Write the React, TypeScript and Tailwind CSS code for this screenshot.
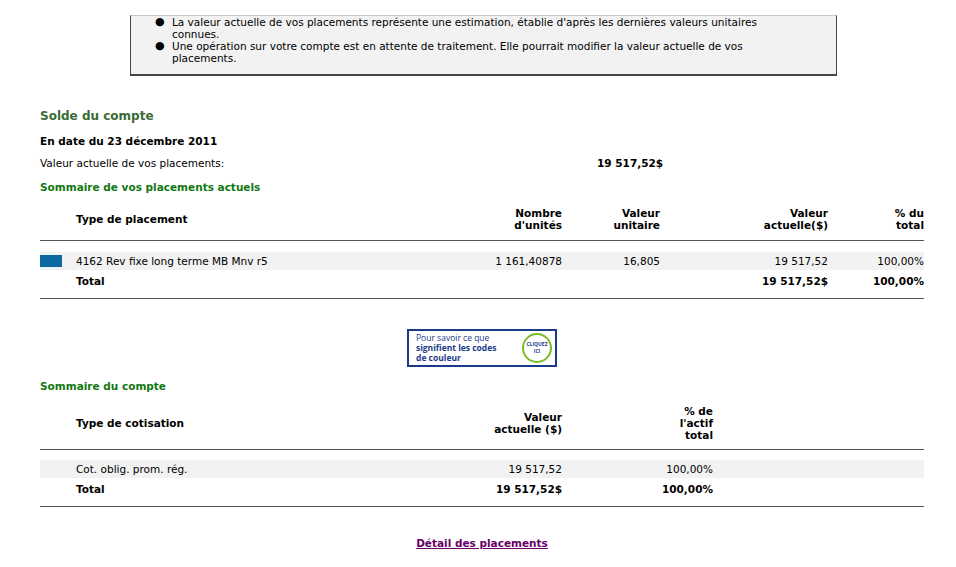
export default function App() {
  const f = { fontFamily: "'DejaVu Sans', Verdana, sans-serif" };
  return (
    <div className="w-[956px] h-[567px] bg-white text-[10.5px] text-black leading-[12px] overflow-hidden" style={f}>
      <div className="pt-[15px] pl-[130px]">
        <div className="w-[707px] h-[61px] bg-[#f2f2f2] border border-[#c8c8c8] border-r-[#444] border-b-2 border-b-[#444] border-l-[#444] pl-[24px] pr-[30px]">
          <div className="flex"><span className="w-[17px] text-[11px]">●</span><span className="flex-1">La valeur actuelle de vos placements représente une estimation, établie d'après les dernières valeurs unitaires connues.</span></div>
          <div className="flex"><span className="w-[17px] text-[11px]">●</span><span className="flex-1">Une opération sur votre compte est en attente de traitement. Elle pourrait modifier la valeur actuelle de vos placements.</span></div>
        </div>
      </div>
      <div className="px-[40px] w-[884px] box-content">
        <div className="mt-[34px] text-[12px] font-bold text-[#3a6b35] h-[16px]">Solde du compte</div>
        <div className="mt-[9px] font-bold h-[12px]">En date du 23 décembre 2011</div>
        <div className="mt-[10px] flex h-[12px]"><span className="w-[557px]">Valeur actuelle de vos placements:</span><span className="font-bold">19 517,52$</span></div>
        <div className="mt-[12px] font-bold text-[#117711] h-[12px]">Sommaire de vos placements actuels</div>
        <div className="mt-[9px] h-[30px] flex items-center font-bold border-b border-[#555] box-content pt-[2px] pb-[6px]">
          <span className="w-[36px]"></span>
          <span className="w-[406px]">Type de placement</span>
          <span className="w-[80px] text-right">Nombre<br />d'unités</span>
          <span className="w-[98px] text-right">Valeur<br />unitaire</span>
          <span className="w-[168px] text-right">Valeur<br />actuelle($)</span>
          <span className="w-[96px] text-right">% du<br />total</span>
        </div>
        <div className="mt-[11px] h-[18px] bg-[#f2f2f2] flex items-center">
          <span className="w-[36px]"><span className="block w-[22px] h-[12px] bg-[#0a6aa1]"></span></span>
          <span className="w-[406px]">4162 Rev fixe long terme MB Mnv r5</span>
          <span className="w-[80px] text-right">1 161,40878</span>
          <span className="w-[98px] text-right">16,805</span>
          <span className="w-[168px] text-right">19 517,52</span>
          <span className="w-[96px] text-right">100,00%</span>
        </div>
        <div className="h-[29px] flex items-start pt-[5px] font-bold border-b border-[#555]">
          <span className="w-[36px]"></span>
          <span className="w-[584px]">Total</span>
          <span className="w-[168px] text-right">19 517,52$</span>
          <span className="w-[96px] text-right">100,00%</span>
        </div>
        <div className="mt-[30px] flex justify-center">
          <div className="w-[150px] h-[38px] border-2 border-[#1a3a8a] flex items-center pl-[7px] pr-[3px] text-[8.5px] leading-[10px] text-[#1a3a8a]" style={{ fontFamily: "'Open Sans', sans-serif" }}>
            <div className="flex-1">Pour savoir ce que<br /><b>signifient les codes<br />de couleur</b></div>
            <div className="w-[30px] h-[30px] rounded-full border-2 border-[#7dbb2a] flex flex-col items-center justify-center text-[5px] leading-[7px] font-bold">CLIQUEZ<span>ICI</span></div>
          </div>
        </div>
        <div className="mt-[13px] font-bold text-[#117711] h-[12px]">Sommaire du compte</div>
        <div className="mt-[12px] h-[37px] flex items-center font-bold border-b border-[#555] box-content pb-[8px]">
          <span className="w-[36px]"></span>
          <span className="w-[406px]">Type de cotisation</span>
          <span className="w-[80px] text-right">Valeur<br />actuelle ($)</span>
          <span className="w-[151px] text-right">% de<br />l'actif<br />total</span>
        </div>
        <div className="mt-[10px] h-[18px] bg-[#f2f2f2] flex items-center">
          <span className="w-[36px]"></span>
          <span className="w-[406px]">Cot. oblig. prom. rég.</span>
          <span className="w-[80px] text-right">19 517,52</span>
          <span className="w-[151px] text-right">100,00%</span>
        </div>
        <div className="h-[29px] flex items-start pt-[5px] font-bold border-b border-[#555]">
          <span className="w-[36px]"></span>
          <span className="w-[406px]">Total</span>
          <span className="w-[80px] text-right">19 517,52$</span>
          <span className="w-[151px] text-right">100,00%</span>
        </div>
        <div className="mt-[30px] text-center"><a className="font-bold text-[#660066] underline">Détail des placements</a></div>
      </div>
    </div>
  );
}
